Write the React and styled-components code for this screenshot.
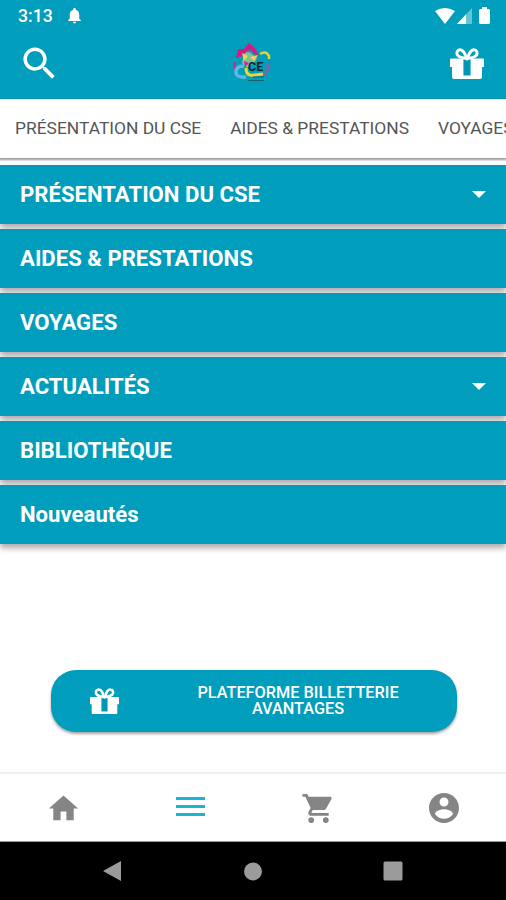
import React from "react";
import styled, { createGlobalStyle } from "styled-components";

const TEAL = "#009dbc";

const GlobalStyle = createGlobalStyle`
  * { box-sizing: border-box; }
  body { margin: 0; background: #fff; font-family: Roboto, sans-serif; overflow: hidden; }
`;

const Screen = styled.div`
  width: 506px;
  height: 900px;
  display: flex;
  flex-direction: column;
  overflow: hidden;
  background: #fff;
`;

const Header = styled.header`
  height: 98.5px;
  flex: none;
  background: ${TEAL};
  color: #fff;
  display: flex;
  flex-direction: column;
`;

const StatusBar = styled.div`
  height: 31px;
  padding: 0 16px 0 18px;
  display: flex;
  align-items: center;
  justify-content: space-between;
`;

const StatusGroup = styled.div`
  display: flex;
  align-items: center;
  gap: ${(p) => p.$gap}px;
`;

const Clock = styled.span`
  font-size: 17.6px;
  font-weight: 500;
  line-height: 32px;
`;

const AppBar = styled.div`
  flex: 1;
  display: grid;
  grid-template-columns: 212px 46px 1fr;
  align-items: center;
  padding: 0 22px 2px 18px;
`;

const IconButton = styled.button`
  border: 0;
  padding: 0;
  background: none;
  color: inherit;
  display: flex;
  justify-self: ${(p) => p.$side};
`;

const Tabs = styled.nav`
  flex: none;
  height: 59.5px;
  padding-left: 15px;
  display: flex;
  gap: 29px;
  white-space: nowrap;
  background: #fff;
  box-shadow: 0 1px 2px 1px rgba(0, 0, 0, 0.4);
  clip-path: inset(0 0 -4px 0);
`;

const Tab = styled.span`
  font-size: 17.4px;
  line-height: 59px;
  color: #555;
`;

const Menu = styled.ul`
  list-style: none;
  margin: 7px 0 0;
  padding: 0;
  flex: 1;
  display: flex;
  flex-direction: column;
  gap: 5px;
`;

const MenuRow = styled.li`
  height: 59px;
  flex: none;
  padding: 0 20px 1px;
  display: flex;
  align-items: center;
  justify-content: space-between;
  background: ${TEAL};
  color: #fff;
  font-size: 22.15px;
  font-weight: 700;
  box-shadow: 0 4px 6px rgba(20, 0, 10, 0.34);
`;

const Caret = styled.span`
  width: 0;
  height: 0;
  border: 7px solid transparent;
  border-top-color: #fff;
  border-bottom: 0;
`;

const Platform = styled.button`
  flex: none;
  width: 406px;
  height: 62px;
  margin: 0 0 40px 51px;
  padding: 0 58px 0 39px;
  border: 0;
  border-radius: 25px;
  display: flex;
  align-items: center;
  justify-content: space-between;
  background: ${TEAL};
  color: #fff;
  box-shadow: 0 2px 3px rgba(0, 0, 0, 0.36);
  font: 500 16.3px/16px Roboto, sans-serif;
`;

const PlatformLabel = styled.span`
  width: 202px;
  text-align: center;
  white-space: nowrap;
`;

const BottomNav = styled.nav`
  flex: none;
  height: 70px;
  padding-left: 1px;
  border-top: 2px solid #efefef;
  border-bottom: 1px solid #999;
  display: grid;
  grid-template-columns: repeat(4, 1fr);
  place-items: center;
  color: #858585;
`;

const NavItem = styled.a`
  display: flex;
  padding: ${(p) => p.$inset || "1px 0 0"};
  color: ${(p) => (p.$active ? "#16b5d2" : "inherit")};
`;

const SystemBar = styled.div`
  flex: none;
  height: 58px;
  padding: 0 103px 0 102px;
  background: #000;
  color: #9b9b9b;
  display: flex;
  align-items: center;
  justify-content: space-between;
`;

const Icon = ({ size, d }) => (
  <svg width={size} height={size} viewBox="0 0 24 24" fill="currentColor">
    <path d={d} />
  </svg>
);

const BELL = "M12 22c1.1 0 2-.9 2-2h-4c0 1.1.9 2 2 2zm6-6v-5c0-3.07-1.64-5.64-4.5-6.32V4c0-.83-.67-1.5-1.5-1.5s-1.5.67-1.5 1.5v.68C7.63 5.36 6 7.92 6 11v5l-2 2v1h16v-1l-2-2z";
const SEARCH = "M15.5 14h-.79l-.28-.27C15.41 12.59 16 11.11 16 9.5 16 5.91 13.09 3 9.5 3S3 5.91 3 9.5 5.91 16 9.5 16c1.61 0 3.09-.59 4.23-1.57l.27.28v.79l5 4.99L20.49 19l-4.99-5zm-6 0C7.01 14 5 11.99 5 9.5S7.01 5 9.5 5 14 7.01 14 9.5 11.99 14 9.5 14z";
const HOME = "M10 20v-6h4v6h5v-8h3L12 3 2 12h3v8z";
const CART = "M7 18c-1.1 0-1.99.9-1.99 2S5.9 22 7 22s2-.9 2-2-.9-2-2-2zM1 2v2h2l3.6 7.59-1.35 2.45c-.16.28-.25.61-.25.96 0 1.1.9 2 2 2h12v-2H7.42c-.14 0-.25-.11-.25-.25l.03-.12.9-1.63h7.45c.75 0 1.41-.41 1.75-1.03l3.58-6.49c.08-.14.12-.31.12-.48 0-.55-.45-1-1-1H5.21l-.94-2H1zm16 16c-1.1 0-1.99.9-1.99 2s.89 2 1.99 2 2-.9 2-2-.9-2-2-2z";
const ACCOUNT = "M12 2C6.48 2 2 6.48 2 12s4.48 10 10 10 10-4.48 10-10S17.52 2 12 2zm0 3c1.66 0 3 1.34 3 3s-1.34 3-3 3-3-1.34-3-3 1.34-3 3-3zm0 14.2c-2.5 0-4.71-1.28-6-3.22.03-1.99 4-3.08 6-3.08 1.99 0 5.97 1.09 6 3.08-1.29 1.94-3.5 3.22-6 3.22z";

const Gift = ({ width }) => (
  <svg width={width} height={(width * 31) / 34} viewBox="0 0 34 31" fill="currentColor">
    <path d="M1 10.500h32a1 1 0 0 1 1 1V19h-2v10a2 2 0 0 1-2 2H4a2 2 0 0 1-2-2V19H0v-7.500a1 1 0 0 1 1-1z" />
    <path d="M13.400 11h7.200v16.500h-7.200z" fill={TEAL} />
    <path d="M14.600 12h4.800v15h-4.800z" fill="#007d98" opacity=".22" />
    <g fill="none" stroke="currentColor" strokeWidth="3">
      <path d="M16.200 10.500C15.500 5 12.500 1.500 9.700 1.800 7 2 6.300 5.300 7.600 7.300 9 9.500 13 9.800 16.200 10.500z" />
      <path d="M17.800 10.500C18.500 5 21.500 1.500 24.300 1.800 27 2 27.700 5.300 26.400 7.300 25 9.500 21 9.800 17.800 10.500z" />
    </g>
  </svg>
);

const Logo = () => (
  <svg width="46" height="46" viewBox="0 0 46 46" fill="none">
    <path d="M6 17L8 8l6 0 5-6 6 5 4 8-5-2-3-4-4 1-4 5z" fill="#d31b83" />
    <path d="M14 13q4-4 8 0l5 4-2 4-8 6-5-5z" fill="#86bd9b" />
    <path d="M12 12l6 3-4 5zM20 16l8-2-4 6z" fill="#f0d548" />
    <path d="M30 13q6-4 9 2v3" stroke="#e5d338" strokeWidth="2.5" />
    <path d="M37 23q3 6-3 11" stroke="#b54e98" strokeWidth="2" />
    <path d="M5 21q-2 7 3 13" stroke="#c92c87" strokeWidth="2" />
    <path d="M14 25q-8 0-8 6t10 5" stroke="#59b9e5" strokeWidth="3.500" />
    <path d="M14 20l5 2-4 4z" fill="#c92c87" />
    <path d="M16 27q0 9 9 7l8-1" stroke="#efd532" strokeWidth="3" />
    <text x="18" y="29.500" fill="#10242d" fontFamily="Roboto" fontWeight="700" fontSize="12.500">CE</text>
    <path d="M23 36h11M18 39.500h16" stroke="#17616f" strokeWidth="1" />
  </svg>
);

const Wifi = () => (
  <svg width="20" height="16" viewBox="0 0 20 16" fill="#fff"><path d="M0 3Q10-3 20 3L10 16z" /></svg>
);
const Signal = () => (
  <svg width="15" height="16" viewBox="0 0 15 16" fill="#fff"><path d="M15 0v16H0z" opacity=".4" /><path d="M9 6.400V16H0z" /></svg>
);

const BatterySvg = styled.svg`
  margin-left: 5px;
`;
const Battery = () => (
  <BatterySvg width="11" height="17" viewBox="0 0 11 17" fill="#fff"><path d="M3 0h5v2h2l1 1v13l-1 1H1l-1-1V3l1-1h2z" /></BatterySvg>
);

const rows = [
  ["PRÉSENTATION DU CSE", true],
  ["AIDES & PRESTATIONS", false],
  ["VOYAGES", false],
  ["ACTUALITÉS", true],
  ["BIBLIOTHÈQUE", false],
  ["Nouveautés", false],
];

export default function App() {
  return (
    <>
      <GlobalStyle />
      <Screen>
        <Header>
          <StatusBar>
            <StatusGroup $gap={12}><Clock>3:13</Clock><Icon size={19} d={BELL} /></StatusGroup>
            <StatusGroup $gap={2}><Wifi /><Signal /><Battery /></StatusGroup>
          </StatusBar>
          <AppBar>
            <IconButton $side="start" aria-label="Rechercher"><Icon size={43} d={SEARCH} /></IconButton>
            <Logo />
            <IconButton $side="end" aria-label="Cadeaux"><Gift width={34} /></IconButton>
          </AppBar>
        </Header>
        <Tabs>
          <Tab>PRÉSENTATION DU CSE</Tab>
          <Tab>AIDES &amp; PRESTATIONS</Tab>
          <Tab>VOYAGES</Tab>
        </Tabs>
        <Menu>
          {rows.map(([label, expandable]) => (
            <MenuRow key={label}>{label}{expandable && <Caret />}</MenuRow>
          ))}
        </Menu>
        <Platform>
          <Gift width={29} />
          <PlatformLabel>PLATEFORME BILLETTERIE<br />AVANTAGES</PlatformLabel>
        </Platform>
        <BottomNav>
          <NavItem $inset="1px 1px 0 0"><Icon size={35} d={HOME} /></NavItem>
          <NavItem $active $inset="0 0 1px">
            <svg width="29" height="20" viewBox="0 0 29 20" fill="currentColor"><path d="M0 0h29v3H0zM0 8h29v3H0zM0 16h29v3H0z" /></svg>
          </NavItem>
          <NavItem $inset="1px 0 0 4px"><Icon size={35} d={CART} /></NavItem>
          <NavItem $inset="1px 0 0 3px"><Icon size={36} d={ACCOUNT} /></NavItem>
        </BottomNav>
        <SystemBar>
          <svg width="20" height="22" viewBox="0 0 20 22" fill="currentColor"><path d="M19 1v20L1 11z" /></svg>
          <svg width="19" height="19" viewBox="0 0 19 19" fill="currentColor"><circle cx="10" cy="9.500" r="9" /></svg>
          <svg width="20" height="20" viewBox="0 0 20 20" fill="currentColor"><rect x=".5" y=".5" width="19" height="19" rx="1.500" /></svg>
        </SystemBar>
      </Screen>
    </>
  );
}
